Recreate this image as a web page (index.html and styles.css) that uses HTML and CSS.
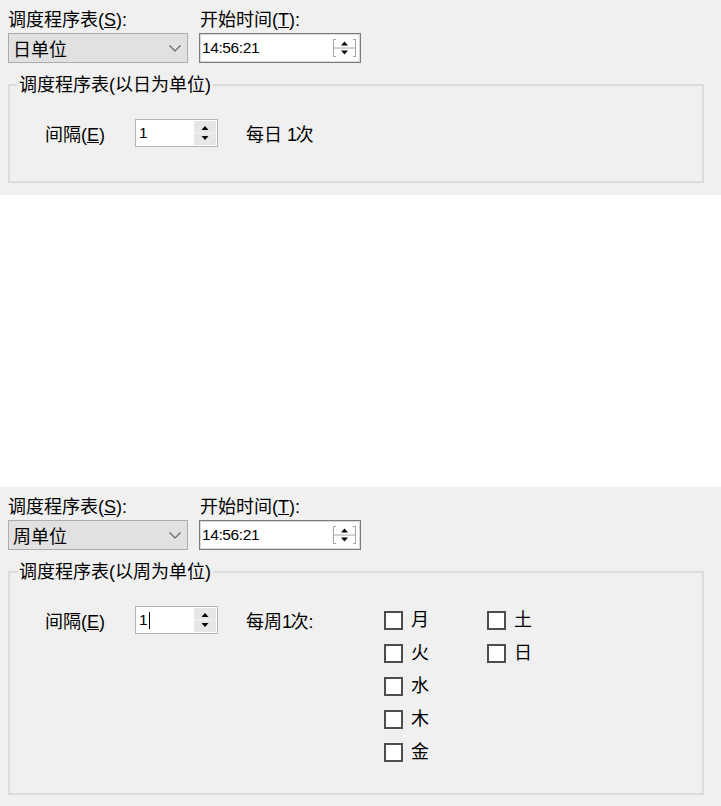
FILE: index.html
```html
<!DOCTYPE html>
<html lang="zh">
<head>
<meta charset="utf-8">
<title>调度程序表</title>
<link rel="stylesheet" href="styles.css">
</head>
<body>
<div class="panel">
  <div class="top-row">
    <div class="field f-schedule">
      <div class="lbl">调度程序表(<u>S</u>):</div>
      <div class="combo"><span>日单位</span>
        <svg class="chev" width="12" height="7" viewBox="0 0 12 7"><path d="M0.5 0.5L6 6L11.5 0.5" fill="none" stroke="#606060" stroke-width="1.1"/></svg>
      </div>
    </div>
    <div class="field f-time">
      <div class="lbl lbl-time">开始时间(<u>T</u>):</div>
      <div class="timebox"><span class="num">14:56:21</span>
        <svg class="spin-t" width="23" height="20" viewBox="0 0 23 20"><path d="M0.5 1v18M22.5 1v18M1 10h21M0 1.5h3M20 1.5h3M0 18.5h3M20 18.5h3" stroke="#a6a6a6" stroke-width="1"/><path d="M8 7.5h7l-3.5-4z M8 12.5h7l-3.5 4z" fill="#000"/></svg>
      </div>
    </div>
  </div>
  <fieldset class="group">
    <legend>调度程序表(以日为单位)</legend>
    <div class="group-body">
      <div class="interval-row">
        <span class="int-label">间隔(<u>E</u>)</span>
        <div class="numbox"><span class="num">1</span>
          <svg class="spin-n" width="22" height="24" viewBox="0 0 22 24"><rect width="22" height="24" fill="#e6e6e6"/><path d="M0 12h22" stroke="#f4f4f4"/><path d="M7.5 9h7l-3.5-4z M7.5 15h7l-3.5 4z" fill="#000"/></svg>
        </div>
        <span class="freq">每日 <span class="one">1</span>次</span>
      </div>
    </div>
  </fieldset>
</div>

<div class="panel panel-week">
  <div class="top-row">
    <div class="field f-schedule">
      <div class="lbl">调度程序表(<u>S</u>):</div>
      <div class="combo"><span>周单位</span>
        <svg class="chev" width="12" height="7" viewBox="0 0 12 7"><path d="M0.5 0.5L6 6L11.5 0.5" fill="none" stroke="#606060" stroke-width="1.1"/></svg>
      </div>
    </div>
    <div class="field f-time">
      <div class="lbl lbl-time">开始时间(<u>T</u>):</div>
      <div class="timebox"><span class="num">14:56:21</span>
        <svg class="spin-t" width="23" height="20" viewBox="0 0 23 20"><path d="M0.5 1v18M22.5 1v18M1 10h21M0 1.5h3M20 1.5h3M0 18.5h3M20 18.5h3" stroke="#a6a6a6" stroke-width="1"/><path d="M8 7.5h7l-3.5-4z M8 12.5h7l-3.5 4z" fill="#000"/></svg>
      </div>
    </div>
  </div>
  <fieldset class="group">
    <legend>调度程序表(以周为单位)</legend>
    <div class="group-body group-week">
      <div class="interval-row">
        <span class="int-label">间隔(<u>E</u>)</span>
        <div class="numbox"><span class="num">1<span class="caret"></span></span>
          <svg class="spin-n" width="22" height="24" viewBox="0 0 22 24"><rect width="22" height="24" fill="#e6e6e6"/><path d="M0 12h22" stroke="#f4f4f4"/><path d="M7.5 9h7l-3.5-4z M7.5 15h7l-3.5 4z" fill="#000"/></svg>
        </div>
        <span class="freq">每周<span class="one">1</span>次:</span>
      </div>
      <div class="days">
        <label class="day"><span class="box"></span>月</label>
        <label class="day"><span class="box"></span>火</label>
        <label class="day"><span class="box"></span>水</label>
        <label class="day"><span class="box"></span>木</label>
        <label class="day"><span class="box"></span>金</label>
        <label class="day"><span class="box"></span>土</label>
        <label class="day"><span class="box"></span>日</label>
      </div>
    </div>
  </fieldset>
</div>
</body>
</html>
```
FILE: styles.css
```css
html, body {
  margin: 0;
  padding: 0;
  background: #ffffff;
  overflow: hidden;
}

body {
  font-family: "Liberation Sans", "Noto Sans CJK JP", sans-serif;
  font-size: 18px;
  color: #000;
}

.panel {
  background: #f0f0f0;
  padding: 10px 17px 12px 8px;
}

.panel-week {
  margin-top: 292px;
  padding-bottom: 11px;
}

.top-row {
  display: flex;
}

.f-schedule {
  width: 180px;
}

.f-time {
  width: 162px;
  margin-left: 11px;
}

.lbl {
  height: 20px;
  line-height: 20px;
  margin-bottom: 3px;
  white-space: nowrap;
}

.lbl-time {
  padding-left: 1px;
}

.combo {
  height: 30px;
  box-sizing: border-box;
  border: 1px solid #adadad;
  background: #e1e1e1;
  display: flex;
  align-items: center;
  justify-content: space-between;
  padding: 0 6px 0 4px;
}

.chev {
  display: block;
  margin-top: 1px;
}

.timebox {
  height: 30px;
  box-sizing: border-box;
  border: 1px solid #7a7a7a;
  box-shadow: inset 0 0 0 1px #d9d9d9;
  background: #ffffff;
  display: flex;
  align-items: center;
  justify-content: space-between;
  padding: 0 4px 0 2px;
}

.num {
  font-size: 15.5px;
  letter-spacing: -0.4px;
  display: flex;
  align-items: center;
}

.spin-t, .spin-n {
  display: block;
}

.group {
  margin: 12px 0 0;
  padding: 0;
  border: 2px solid #dcdcdc;
  min-width: 0;
}

.group legend {
  margin-left: 7px;
  padding: 0 2px;
  line-height: 20px;
  font-size: 18px;
}

.group-body {
  display: flex;
  align-items: flex-start;
  padding: 24px 0 34px 35px;
}

.group-week {
  padding-bottom: 31px;
}

.interval-row {
  display: flex;
  align-items: center;
  height: 28px;
  width: 339px;
}

.int-label {
  width: 90px;
  flex: none;
}

.numbox {
  width: 83px;
  height: 28px;
  box-sizing: border-box;
  border: 1px solid #b4b4b4;
  background: #ffffff;
  display: flex;
  align-items: center;
  justify-content: space-between;
  padding: 0 1px 0 3px;
  flex: none;
}

.caret {
  display: inline-block;
  width: 1px;
  height: 17px;
  background: #000;
  margin-left: 2px;
}

.freq {
  margin-left: 28px;
  white-space: nowrap;
}

.one {
  letter-spacing: -1.5px;
}

.days {
  display: grid;
  grid-auto-flow: column;
  grid-template-rows: repeat(5, 19px);
  grid-template-columns: 103px auto;
  row-gap: 14px;
  margin-top: 5px;
}

.day {
  display: flex;
  align-items: center;
  gap: 8px;
  height: 19px;
  line-height: 19px;
}

.box {
  width: 19px;
  height: 19px;
  box-sizing: border-box;
  border: 2px solid #4d4d4d;
  background: #ffffff;
  flex: none;
}
```
